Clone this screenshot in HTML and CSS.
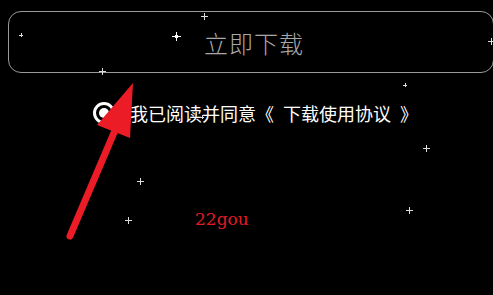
FILE: index.html
```html
<!DOCTYPE html>
<html lang="zh">
<head>
<meta charset="utf-8">
<link rel="stylesheet" href="styles.css">
</head>
<body>
<div class="page">
  <div class="download-btn">立即下载</div>
  <div class="agree">
    <span class="radio"><span class="dot"></span></span>
    <span class="agree-text">我已阅读并同意《&ensp;下载使用协议&ensp;》</span>
  </div>
  <div class="mark">22gou</div>

  <span class="star s-lg" style="left:176px;top:36px"></span>
  <span class="star" style="left:204px;top:16px"></span>
  <span class="star s-sm" style="left:21px;top:35px"></span>
  <span class="star" style="left:102px;top:71px"></span>
  <span class="star s-sm" style="left:405px;top:85px"></span>
  <span class="star" style="left:491px;top:41px"></span>
  <span class="star" style="left:426px;top:148px"></span>
  <span class="star" style="left:140px;top:181px"></span>
  <span class="star" style="left:128px;top:220px"></span>
  <span class="star" style="left:409px;top:210px"></span>
  <span class="star s-sm" style="left:202px;top:117px"></span>

  <svg class="arrow" width="493" height="295" viewBox="0 0 493 295">
    <line x1="70" y1="236" x2="116" y2="128" stroke="#ec1c26" stroke-width="7" stroke-linecap="round"/>
    <polygon points="133,83 97,125 130,138" fill="#ec1c26"/>
  </svg>
</div>
</body>
</html>
```

FILE: styles.css
```css
html, body {
  margin: 0;
  padding: 0;
  background: #000;
}
.page {
  position: relative;
  width: 493px;
  height: 295px;
  overflow: hidden;
  background: #000;
  padding-top: 11px;
  box-sizing: border-box;
}
.download-btn {
  margin-left: 8px;
  width: 486px;
  height: 62px;
  box-sizing: border-box;
  border: 1.5px solid #9a9a9a;
  border-radius: 13px;
  display: flex;
  align-items: center;
  justify-content: center;
  padding-left: 6px;
  color: #a8a8a8;
  font-family: "Noto Sans CJK SC", sans-serif;
  font-size: 24px;
  font-weight: 300;
  letter-spacing: 1px;
}
.agree {
  margin-top: 29px;
  display: flex;
  align-items: center;
  gap: 15px;
  padding-left: 93px;
  height: 22px;
}
.radio {
  width: 22px;
  height: 22px;
  box-sizing: border-box;
  border: 3px solid #fff;
  border-radius: 50%;
  display: flex;
  align-items: center;
  justify-content: center;
}
.dot {
  width: 10px;
  height: 10px;
  border-radius: 50%;
  background: #fff;
}
.agree-text {
  color: #fff;
  font-family: "Noto Sans CJK SC", sans-serif;
  font-size: 18px;
  line-height: 22px;
}
.mark {
  margin-top: 85px;
  margin-left: 195px;
  color: #e21b26;
  font-family: "DejaVu Serif", serif;
  font-size: 17px;
  line-height: 20px;
}
.star {
  position: absolute;
  width: 7px;
  height: 7px;
  margin: -3px 0 0 -3px;
  background:
    linear-gradient(#ddd, #ddd) center / 1px 100% no-repeat,
    linear-gradient(#ddd, #ddd) center / 100% 1px no-repeat;
}
.s-lg {
  width: 9px;
  height: 9px;
  margin: -4px 0 0 -4px;
  background:
    linear-gradient(#fff, #fff) center / 1px 100% no-repeat,
    linear-gradient(#fff, #fff) center / 100% 1px no-repeat,
    radial-gradient(circle, #fff 1.5px, transparent 2px);
}
.s-sm {
  width: 4px;
  height: 4px;
  margin: -2px 0 0 -2px;
}
.arrow {
  position: absolute;
  left: 0;
  top: 0;
}
```
